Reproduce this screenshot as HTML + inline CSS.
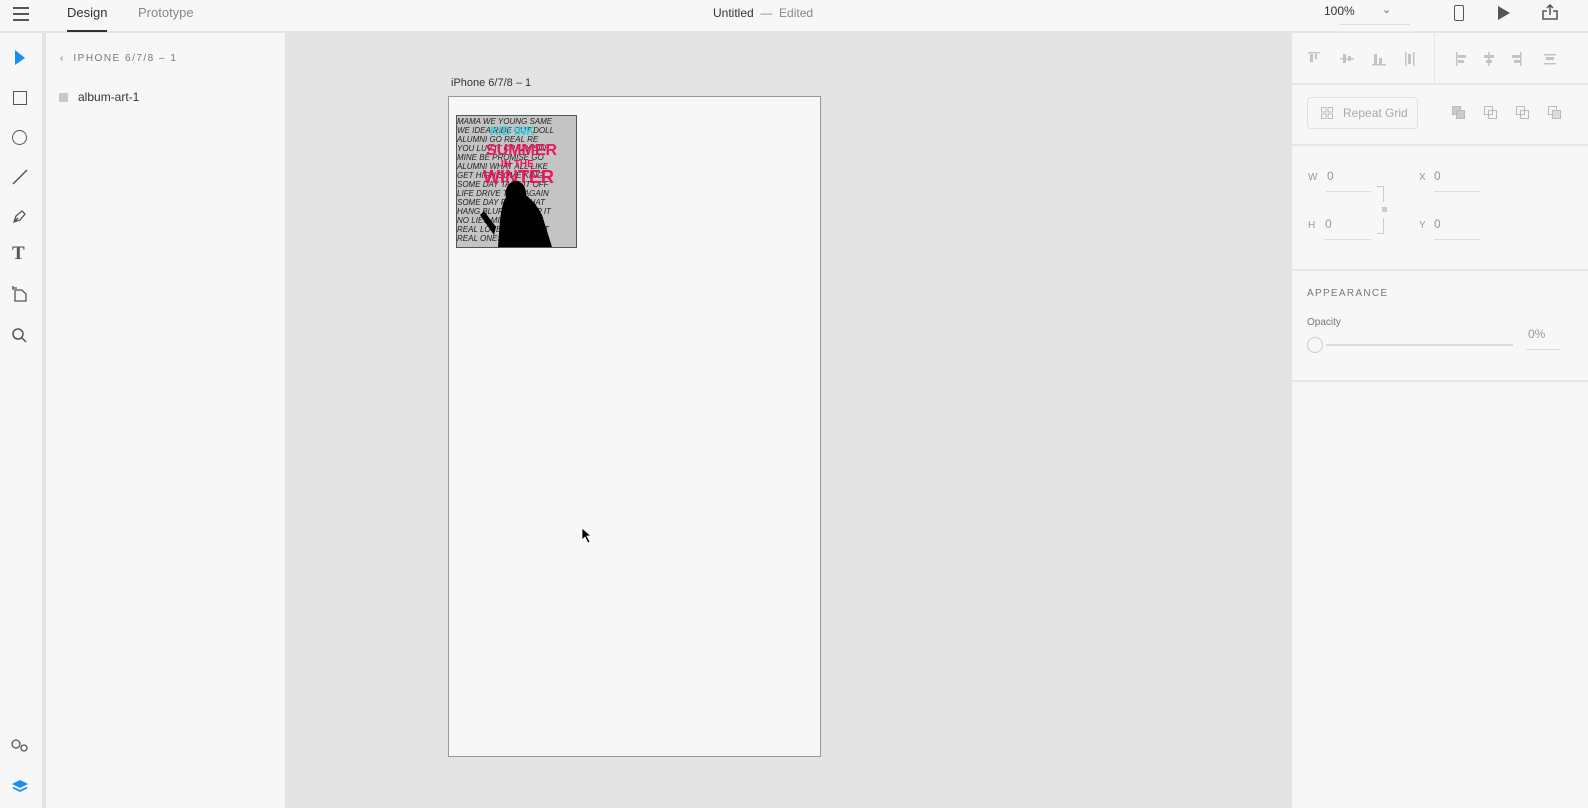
<!DOCTYPE html>
<html style="overflow:hidden;width:1588px;height:808px"><head><meta charset="utf-8"><style>
*{margin:0;padding:0;box-sizing:border-box}
body{width:1588px;height:808px;overflow:hidden;background:#e4e4e4;font-family:"Segoe UI","Liberation Sans",sans-serif;position:relative;color:#333}
.abs{position:absolute}
#top{left:0;top:0;width:1588px;height:33px;background:#f7f7f7;border-bottom:2px solid #e6e6e6}
#lt{left:0;top:33px;width:44px;height:775px;background:#f7f7f7;border-right:2px solid #e2e2e2}
#lay{left:46px;top:33px;width:239px;height:775px;background:#f7f7f7}
#rp{left:1292px;top:33px;width:296px;height:775px;background:#f7f7f7}
.hr{position:absolute;left:0;width:296px;height:2px;background:#e6e6e6}
.t{position:absolute;font-size:12px;white-space:nowrap}
.ln{position:absolute;height:1px;background:#ddd}
</style></head><body>
<div id="top" class="abs">
 <div class="abs" style="left:13px;top:7px;width:16px;height:2px;background:#555;box-shadow:0 6px 0 #555,0 12px 0 #555"></div>
 <div class="t" style="left:67px;top:5px;font-size:13px;color:#333">Design</div>
 <div class="abs" style="left:67px;top:30px;width:40px;height:2px;background:#333"></div>
 <div class="t" style="left:138px;top:5px;font-size:13px;color:#888">Prototype</div>
 <div class="t" style="left:713px;top:6px;color:#333">Untitled <span style="color:#888">&nbsp;—&nbsp; Edited</span></div>
 <div class="t" style="left:1324px;top:4px;color:#333">100%</div>
 <div class="t" style="left:1382px;top:3px;color:#666;font-size:11px">&#8964;</div>
 <div class="ln" style="left:1340px;top:24px;width:70px;background:#ddd"></div>
 <div class="abs" style="left:1454px;top:5px;width:10px;height:16px;border:1.5px solid #555;border-radius:2px"></div>
 <svg class="abs" style="left:1497px;top:6px" width="14" height="14"><path d="M1 0 L13 7 L1 14Z" fill="#555"/></svg>
 <svg class="abs" style="left:1542px;top:4px" width="16" height="16" fill="none" stroke="#555" stroke-width="1.5"><path d="M5 7H1V15H15V7H11M8 11V1M5 4L8 1L11 4"/></svg>
</div>
<div id="lt" class="abs">
 <svg class="abs" style="left:14px;top:17px" width="12" height="16"><path d="M1 0 L11 8 L1 15Z" fill="#1a8ef0"/></svg>
 <div class="abs" style="left:13px;top:58px;width:14px;height:14px;border:1.5px solid #555"></div>
 <div class="abs" style="left:12px;top:97px;width:15px;height:15px;border:1.5px solid #555;border-radius:50%"></div>
 <svg class="abs" style="left:12px;top:136px" width="16" height="16"><path d="M1 15L15 1" stroke="#555" stroke-width="1.5"/></svg>
 <svg class="abs" style="left:12px;top:175px" width="16" height="16" fill="none" stroke="#555" stroke-width="1.3"><path d="M2 14L4 8L10 3L13 6L8 12Z M2 14L6 10"/></svg>
 <div class="t" style="left:12px;top:210px;font-size:19px;font-family:'Liberation Serif',serif;font-weight:bold;color:#555">T</div>
 <svg class="abs" style="left:10px;top:252px" width="18" height="18" fill="none" stroke="#555" stroke-width="1.3"><path d="M5 5H12L16 9V16H5Z M3 3H7 M3 1V5"/></svg>
 <svg class="abs" style="left:11px;top:294px" width="16" height="16" fill="none" stroke="#555" stroke-width="1.5"><circle cx="7" cy="7" r="5"/><path d="M10.5 10.5L15 15"/></svg>
 <svg class="abs" style="left:11px;top:706px" width="18" height="14" fill="none" stroke="#555" stroke-width="1.3"><circle cx="5" cy="5" r="4"/><circle cx="13" cy="9" r="3"/></svg>
 <svg class="abs" style="left:12px;top:747px" width="16" height="14"><path d="M8 0L16 4L8 8L0 4Z" fill="#1a8ef0"/><path d="M0 8L8 12L16 8L14 7L8 10L2 7Z" fill="#1a8ef0"/></svg>
</div>
<div id="lay" class="abs">
 <div class="t" style="left:14px;top:20px;font-size:10px;letter-spacing:1.5px;color:#777">‹&nbsp; IPHONE 6/7/8 – 1</div>
 <div class="abs" style="left:13px;top:60px;width:9px;height:9px;background:#c8c8c8"></div>
 <div class="t" style="left:32px;top:57px;color:#333">album-art-1</div>
</div>
<div class="t" style="left:451px;top:77px;font-size:11px;color:#333">iPhone 6/7/8 – 1</div>
<div class="abs" style="left:448px;top:96px;width:373px;height:661px;background:#f7f7f7;border:1px solid #999"></div>
<svg class="abs" style="left:456px;top:115px" width="121" height="133">
 <rect x="0.5" y="0.5" width="120" height="132" fill="#c4c4c4" stroke="#555"/>
 <g font-family="Liberation Sans" font-size="8" fill="#222" font-style="italic">
  <text x="1" y="9">MAMA WE YOUNG SAME</text>
  <text x="1" y="18">WE IDEA RIDE OUT DOLL</text>
  <text x="1" y="27">ALUMNI GO REAL RE</text>
  <text x="1" y="36">YOU LUV IT CRAZY SIN</text>
  <text x="1" y="45">MINE BE PROMISE GO</text>
  <text x="1" y="54">ALUMNI WHAT ALL LIKE</text>
  <text x="1" y="63">GET HIGH SOME KING</text>
  <text x="1" y="72">SOME DAY TAKE IT OFF</text>
  <text x="1" y="81">LIFE DRIVE TIME AGAIN</text>
  <text x="1" y="90">SOME DAY RIDE WHAT</text>
  <text x="1" y="99">HANG BLUR GO KEEP IT</text>
  <text x="1" y="108">NO LIES MIND SO DAY</text>
  <text x="1" y="117">REAL LOVE THIS NIGHT</text>
  <text x="1" y="126">REAL ONES FOREVER</text>
 </g>
 <text x="34" y="20" font-family="Liberation Sans" font-weight="bold" font-size="12" fill="#2ad0e0">KID INK</text>
 <text x="30" y="40" font-family="Liberation Sans" font-weight="bold" font-size="16" fill="#f0145a">SUMMER</text>
 <text x="45" y="52" font-family="Liberation Sans" font-weight="bold" font-size="10" fill="#f0145a">IN THE</text>
 <text x="27" y="68" font-family="Liberation Sans" font-weight="bold" font-size="18" fill="#f0145a">WINTER</text>
 <path d="M42 132 L44 105 Q46 88 50 82 Q48 70 58 66 Q70 66 70 80 Q80 88 86 100 L96 132Z M24 100 L28 96 L40 112 L38 120Z" fill="#000"/>
</svg>
<svg class="abs" style="left:581px;top:527px" width="11" height="17"><path d="M1 1L1 13L4 10L7 16L9 15L6 9L10 9Z" fill="#000" stroke="#fff" stroke-width=".8"/></svg>
<div id="rp" class="abs">
 <svg class="abs" style="left:16px;top:18px" width="270" height="16" fill="#c4c4c4">
  <rect x="0" y="1" width="12" height="1.5"/><rect x="2" y="3" width="3" height="8"/><rect x="7" y="3" width="2" height="5"/>
  <rect x="32" y="7" width="14" height="1.5"/><rect x="35" y="3" width="3" height="9"/><rect x="40" y="5" width="3" height="5"/>
  <rect x="64" y="13" width="14" height="1.5"/><rect x="66" y="3" width="3" height="10"/><rect x="71" y="7" width="3" height="6"/>
  <rect x="97" y="1" width="1.5" height="14"/><rect x="105" y="1" width="1.5" height="14"/><rect x="100" y="3" width="3" height="10"/>
  <rect x="148" y="1" width="1.5" height="14"/><rect x="150" y="4" width="8" height="3"/><rect x="150" y="9" width="6" height="3"/>
  <rect x="180" y="1" width="1.5" height="14"/><rect x="176" y="4" width="10" height="3"/><rect x="178" y="9" width="6" height="3"/>
  <rect x="212" y="1" width="1.5" height="14"/><rect x="204" y="4" width="8" height="3"/><rect x="206" y="9" width="6" height="3"/>
  <rect x="236" y="3" width="12" height="1.5"/><rect x="236" y="12" width="12" height="1.5"/><rect x="238" y="6" width="8" height="3"/>
 </svg>
 <div class="abs" style="left:142px;top:0;width:1px;height:50px;background:#e6e6e6"></div>
 <div class="hr" style="top:50px"></div>
 <div class="abs" style="left:15px;top:64px;width:111px;height:32px;border:1px solid #e0e0e0;border-radius:4px"></div>
 <svg class="abs" style="left:29px;top:74px" width="12" height="12" fill="none" stroke="#bbb"><rect x=".5" y=".5" width="4.5" height="4.5"/><rect x="7" y=".5" width="4.5" height="4.5"/><rect x=".5" y="7" width="4.5" height="4.5"/><rect x="7" y="7" width="4.5" height="4.5"/></svg>
 <div class="t" style="left:51px;top:73px;color:#aaa">Repeat Grid</div>
 <svg class="abs" style="left:160px;top:73px" width="120" height="16" fill="none" stroke="#bbb">
  <rect x=".5" y=".5" width="8" height="8" fill="#ccc"/><rect x="4.5" y="4.5" width="8" height="8" fill="#ccc"/>
  <rect x="32.5" y=".5" width="8" height="8"/><rect x="36.5" y="4.5" width="8" height="8"/>
  <rect x="64.5" y=".5" width="8" height="8"/><rect x="68.5" y="4.5" width="8" height="8"/>
  <rect x="96.5" y=".5" width="8" height="8"/><rect x="100.5" y="4.5" width="8" height="8" fill="#ddd"/>
 </svg>
 <div class="hr" style="top:111px"></div>
 <div class="t" style="left:16px;top:139px;font-size:10px;color:#999">W</div>
 <div class="t" style="left:35px;top:136px;color:#999">0</div>
 <div class="ln" style="left:34px;top:158px;width:45px"></div>
 <div class="t" style="left:127px;top:139px;font-size:10px;color:#999">X</div>
 <div class="t" style="left:142px;top:136px;color:#999">0</div>
 <div class="ln" style="left:142px;top:158px;width:46px"></div>
 <div class="t" style="left:16px;top:187px;font-size:10px;color:#999">H</div>
 <div class="t" style="left:33px;top:184px;color:#999">0</div>
 <div class="ln" style="left:32px;top:206px;width:47px"></div>
 <div class="t" style="left:127px;top:187px;font-size:10px;color:#999">Y</div>
 <div class="t" style="left:142px;top:184px;color:#999">0</div>
 <div class="ln" style="left:142px;top:206px;width:46px"></div>
 <div class="abs" style="left:85px;top:153px;width:7px;height:16px;border:1px solid #ccc;border-left:none;border-bottom:none"></div>
 <div class="abs" style="left:85px;top:185px;width:7px;height:16px;border:1px solid #ccc;border-left:none;border-top:none"></div>
 <div class="abs" style="left:90px;top:174px;width:5px;height:5px;background:#ccc"></div>
 <div class="hr" style="top:236px"></div>
 <div class="t" style="left:15px;top:255px;font-size:10px;letter-spacing:1.3px;color:#777">APPEARANCE</div>
 <div class="t" style="left:15px;top:284px;font-size:10px;color:#777">Opacity</div>
 <div class="abs" style="left:15px;top:304px;width:16px;height:16px;border:1.5px solid #ccc;border-radius:50%"></div>
 <div class="abs" style="left:34px;top:311px;width:187px;height:2px;background:#ddd"></div>
 <div class="t" style="left:236px;top:294px;color:#999">0%</div>
 <div class="ln" style="left:234px;top:316px;width:34px"></div>
 <div class="hr" style="top:347px"></div>
</div>
</body></html>
